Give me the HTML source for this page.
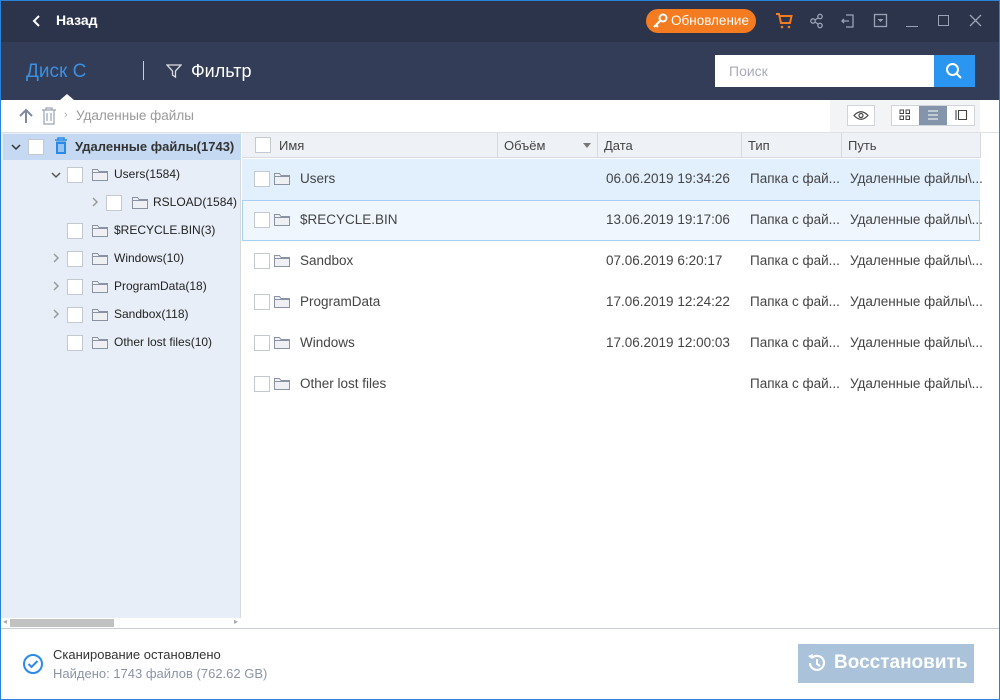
<!DOCTYPE html>
<html><head><meta charset="utf-8"><style>
*{box-sizing:border-box;margin:0;padding:0}
body{width:1000px;height:700px;overflow:hidden;font-family:"Liberation Sans","Noto Sans CJK SC",sans-serif;font-size:13px;color:#333;background:#fff;position:relative}
.a{position:absolute}
.win{left:0;top:0;width:1000px;height:700px;border:1px solid #2a83d8;border-top:none}
.tb{left:0;top:0;width:1000px;height:42px;background:#2c344c;border-top:1px solid #2a83d8}
.bar2{left:0;top:42px;width:1000px;height:58px;background:#333d57}
.cb{position:absolute;width:16px;height:16px;border:1px solid #c4c8cf;background:#fff}
.fold{position:absolute;width:16px;height:13px}
.t{position:absolute;white-space:nowrap}
.row{position:absolute;left:242px;width:738px;height:41px}
.row .t{top:12px;font-size:13.5px;color:#444}
.hd{position:absolute;top:133px;height:25px;background:#eef1f5;border-right:1px solid #d6dae0;border-bottom:1px solid #d6dae0}
.hd span{position:absolute;left:6px;top:5px;font-size:13px;color:#444}
.tr .t{font-size:12px;color:#222}
</style></head><body>
<div class="a tb"></div>
<div class="a bar2"></div>
<svg class="a" style="left:32px;top:15px" width="10" height="12"><path d="M7 1L2 6l5 5" stroke="#fff" stroke-width="2" fill="none"/></svg>
<div class="t" style="left:56px;top:12px;color:#fff;font-weight:bold;font-size:14px">Назад</div>
<div class="a" style="left:646px;top:9px;width:110px;height:24px;border-radius:12px;background:#f47b20"></div>
<svg class="a" style="left:652px;top:13px" width="16" height="16"><circle cx="11" cy="5" r="3.5" stroke="#fff" stroke-width="2" fill="none"/><path d="M8.5 7.5L2 14M4 12l2 2" stroke="#fff" stroke-width="2"/></svg>
<div class="t" style="left:671px;top:13px;color:#fff;font-size:13.5px">Обновление</div>
<svg class="a" style="left:775px;top:12px" width="18" height="18"><path d="M1 2h3l2 9h9l1.5-7H5" stroke="#f47b20" stroke-width="2" fill="none"/><circle cx="7" cy="15" r="1.3" fill="#f47b20"/><circle cx="14" cy="15" r="1.3" fill="#f47b20"/></svg>
<svg class="a" style="left:809px;top:13px" width="16" height="16"><circle cx="4" cy="8" r="2.2" stroke="#9aa3b5" stroke-width="1.3" fill="none"/><circle cx="11" cy="3.5" r="2.2" stroke="#9aa3b5" stroke-width="1.3" fill="none"/><circle cx="11" cy="12.5" r="2.2" stroke="#9aa3b5" stroke-width="1.3" fill="none"/><path d="M6 7l3-2M6 9l3 2" stroke="#9aa3b5" stroke-width="1.3"/></svg>
<svg class="a" style="left:840px;top:13px" width="16" height="16"><path d="M6 2h7v12H6M2 8h7M4 6L2 8l2 2" stroke="#9aa3b5" stroke-width="1.3" fill="none"/></svg>
<svg class="a" style="left:873px;top:13px" width="16" height="16"><rect x="1.5" y="1.5" width="12" height="12" stroke="#9aa3b5" stroke-width="1.3" fill="none"/><path d="M4.5 6h6l-3 3z" fill="#9aa3b5"/></svg>
<div class="a" style="left:906px;top:26px;width:12px;height:1px;background:#9aa3b5"></div>
<div class="a" style="left:938px;top:15px;width:11px;height:11px;border:1.3px solid #9aa3b5"></div>
<svg class="a" style="left:969px;top:14px" width="13" height="13"><path d="M1 1l11 11M12 1L1 12" stroke="#9aa3b5" stroke-width="1.3"/></svg>
<div class="t" style="left:26px;top:61px;color:#3d8fe0;font-size:19px">Диск C</div>
<div class="a" style="left:60px;top:94px;width:0;height:0;border-left:7px solid transparent;border-right:7px solid transparent;border-bottom:6px solid #fff"></div>
<div class="a" style="left:143px;top:61px;width:1px;height:19px;background:#ccd"></div>
<svg class="a" style="left:166px;top:63px" width="16" height="16"><path d="M1 2h14l-5.5 6v6l-3-2V8z" stroke="#ddd" stroke-width="1.3" fill="none"/></svg>
<div class="t" style="left:191px;top:61px;color:#fff;font-size:18px">Фильтр</div>
<div class="a" style="left:715px;top:55px;width:219px;height:32px;background:#fff"></div>
<div class="t" style="left:729px;top:63px;color:#aab;font-size:14px">Поиск</div>
<div class="a" style="left:934px;top:55px;width:41px;height:32px;background:#2b96f2"></div>
<svg class="a" style="left:944px;top:61px" width="20" height="20"><circle cx="8.5" cy="8.5" r="5.5" stroke="#fff" stroke-width="2" fill="none"/><path d="M12.5 12.5L17 17" stroke="#fff" stroke-width="2"/></svg>
<!-- toolbar -->
<svg class="a" style="left:18px;top:108px" width="16" height="16"><path d="M8 15V2M2 8l6-6 6 6" stroke="#7d8aa0" stroke-width="2" fill="none"/></svg>
<svg class="a" style="left:41px;top:107px" width="16" height="18"><path d="M1 3h14M5 3V1h6v2M3 3v14h10V3M6 6v8M10 6v8" stroke="#9aa3b5" stroke-width="1.2" fill="none"/></svg>
<div class="t" style="left:64px;top:109px;color:#aaa;font-size:11px">›</div>
<div class="t" style="left:76px;top:108px;color:#999;font-size:13.5px">Удаленные файлы</div>
<div class="a" style="left:830px;top:100px;width:150px;height:32px;background:#f3f4f6"></div>
<div class="a" style="left:847px;top:105px;width:28px;height:21px;border:1px solid #d0d4da;background:#fff"></div>
<svg class="a" style="left:853px;top:110px" width="16" height="11"><path d="M1 5.5Q8 -2 15 5.5Q8 13 1 5.5z" stroke="#444" stroke-width="1.2" fill="none"/><circle cx="8" cy="5.5" r="2" stroke="#444" stroke-width="1.2" fill="none"/></svg>
<div class="a" style="left:891px;top:105px;width:84px;height:21px;border:1px solid #d0d4da;background:#fff"></div>
<div class="a" style="left:919px;top:106px;width:28px;height:19px;background:#8394ab"></div>
<svg class="a" style="left:899px;top:109px" width="12" height="12"><rect x="1" y="1" width="3.5" height="3.5" stroke="#444" fill="none"/><rect x="7" y="1" width="3.5" height="3.5" stroke="#444" fill="none"/><rect x="1" y="7" width="3.5" height="3.5" stroke="#444" fill="none"/><rect x="7" y="7" width="3.5" height="3.5" stroke="#444" fill="none"/></svg>
<svg class="a" style="left:927px;top:109px" width="12" height="12"><path d="M1 2h10M1 6h10M1 10h10" stroke="#fff" stroke-width="1"/></svg>
<svg class="a" style="left:955px;top:109px" width="13" height="12"><path d="M1 1v10M3.5 1.5h8v9h-8z" stroke="#444" stroke-width="1.1" fill="none"/></svg>
<div class="a" style="left:0;top:132px;width:1000px;height:1px;background:#dde0e5"></div>
<!-- left panel -->
<div class="a" style="left:1px;top:133px;width:240px;height:495px;background:#e8eef7;border-right:1px solid #d6dae0"></div>
<div class="a" style="left:3px;top:134px;width:238px;height:26px;background:#c5daf2"></div>
<div class="tr">
<svg class="a" style="left:11px;top:143px" width="10" height="8"><path d="M1 2l4 4 4-4" stroke="#333" stroke-width="1.5" fill="none"/></svg>
<div class="cb" style="left:28px;top:139px"></div>
<svg class="a" style="left:54px;top:137px" width="14" height="18"><path d="M1 3h12M4 3V1h6v2" stroke="#2b8ae8" stroke-width="1.5" fill="none"/><rect x="2" y="4.5" width="10" height="12.5" fill="#2b8ae8"/><path d="M5 7v8M7 7v8M9 7v8" stroke="#fff" stroke-width="1"/></svg>
<div class="t" style="left:75px;top:139px;font-weight:bold;font-size:13px;color:#333">Удаленные файлы(1743)</div>
<svg class="a" style="left:51px;top:171px" width="10" height="8"><path d="M1 2l4 4 4-4" stroke="#555" stroke-width="1.5" fill="none"/></svg>
<div class="cb" style="left:67px;top:167px"></div>
<svg class="fold" style="left:92px;top:168px"><path d="M.5 1.5h5l1.5 2h8.5v9H.5z" fill="#eef0f4" stroke="#8a93a3"/><path d="M.5 4.5h15" stroke="#8a93a3"/></svg>
<div class="t" style="left:114px;top:167px">Users(1584)</div>
<svg class="a" style="left:91px;top:197px" width="8" height="10"><path d="M2 1l4 4-4 4" stroke="#999" stroke-width="1.5" fill="none"/></svg>
<div class="cb" style="left:106px;top:195px"></div>
<svg class="fold" style="left:132px;top:196px"><path d="M.5 1.5h5l1.5 2h8.5v9H.5z" fill="#eef0f4" stroke="#8a93a3"/><path d="M.5 4.5h15" stroke="#8a93a3"/></svg>
<div class="t" style="left:153px;top:195px">RSLOAD(1584)</div>
<div class="cb" style="left:67px;top:223px"></div>
<svg class="fold" style="left:92px;top:224px"><path d="M.5 1.5h5l1.5 2h8.5v9H.5z" fill="#eef0f4" stroke="#8a93a3"/><path d="M.5 4.5h15" stroke="#8a93a3"/></svg>
<div class="t" style="left:114px;top:223px">$RECYCLE.BIN(3)</div>
<svg class="a" style="left:52px;top:253px" width="8" height="10"><path d="M2 1l4 4-4 4" stroke="#999" stroke-width="1.5" fill="none"/></svg>
<div class="cb" style="left:67px;top:251px"></div>
<svg class="fold" style="left:92px;top:252px"><path d="M.5 1.5h5l1.5 2h8.5v9H.5z" fill="#eef0f4" stroke="#8a93a3"/><path d="M.5 4.5h15" stroke="#8a93a3"/></svg>
<div class="t" style="left:114px;top:251px">Windows(10)</div>
<svg class="a" style="left:52px;top:281px" width="8" height="10"><path d="M2 1l4 4-4 4" stroke="#999" stroke-width="1.5" fill="none"/></svg>
<div class="cb" style="left:67px;top:279px"></div>
<svg class="fold" style="left:92px;top:280px"><path d="M.5 1.5h5l1.5 2h8.5v9H.5z" fill="#eef0f4" stroke="#8a93a3"/><path d="M.5 4.5h15" stroke="#8a93a3"/></svg>
<div class="t" style="left:114px;top:279px">ProgramData(18)</div>
<svg class="a" style="left:52px;top:309px" width="8" height="10"><path d="M2 1l4 4-4 4" stroke="#999" stroke-width="1.5" fill="none"/></svg>
<div class="cb" style="left:67px;top:307px"></div>
<svg class="fold" style="left:92px;top:308px"><path d="M.5 1.5h5l1.5 2h8.5v9H.5z" fill="#eef0f4" stroke="#8a93a3"/><path d="M.5 4.5h15" stroke="#8a93a3"/></svg>
<div class="t" style="left:114px;top:307px">Sandbox(118)</div>
<div class="cb" style="left:67px;top:335px"></div>
<svg class="fold" style="left:92px;top:336px"><path d="M.5 1.5h5l1.5 2h8.5v9H.5z" fill="#eef0f4" stroke="#8a93a3"/><path d="M.5 4.5h15" stroke="#8a93a3"/></svg>
<div class="t" style="left:114px;top:335px">Other lost files(10)</div>
</div>
<div class="a" style="left:1px;top:618px;width:240px;height:10px;background:#fff"></div>
<div class="a" style="left:10px;top:619px;width:104px;height:8px;background:#c2c2c2"></div>
<div class="t" style="left:3px;top:617px;font-size:8px;color:#aaa">◂</div>
<div class="t" style="left:234px;top:617px;font-size:8px;color:#aaa">▸</div>
<!-- headers -->
<div class="hd" style="left:242px;width:256px"><div class="cb" style="left:13px;top:4px"></div><span style="left:37px">Имя</span></div>
<div class="hd" style="left:498px;width:100px"><span>Объём</span><svg class="a" style="left:85px;top:10px" width="8" height="5"><path d="M0 0h8L4 5z" fill="#777"/></svg></div>
<div class="hd" style="left:598px;width:144px"><span>Дата</span></div>
<div class="hd" style="left:742px;width:100px"><span>Тип</span></div>
<div class="hd" style="left:842px;width:139px"><span>Путь</span></div>
<!-- rows -->
<div class="row" style="top:159px;background:#e2effc"></div>
<div class="row" style="top:200px;background:#eff6fe;border:1px solid #a9cff3"></div>
<div id="rows"></div>
<script></script>
<div class="tr2">
<!-- row template repeated -->
</div>
<div style="position:absolute;left:0;top:0">
<div class="cb" style="left:254px;top:171px"></div><svg class="fold" style="left:274px;top:172px"><path d="M.5 1.5h5l1.5 2h8.5v9H.5z" fill="#eef0f4" stroke="#8a93a3"/><path d="M.5 4.5h15" stroke="#8a93a3"/></svg>
<div class="t" style="left:300px;top:171px;font-size:13.5px;color:#444">Users</div><div class="t" style="left:606px;top:171px;font-size:13.5px;color:#444">06.06.2019 19:34:26</div><div class="t" style="left:750px;top:171px;font-size:13.5px;color:#444">Папка с фай...</div><div class="t" style="left:850px;top:171px;font-size:13.5px;color:#444">Удаленные файлы\...</div>
<div class="cb" style="left:254px;top:212px"></div><svg class="fold" style="left:274px;top:213px"><path d="M.5 1.5h5l1.5 2h8.5v9H.5z" fill="#eef0f4" stroke="#8a93a3"/><path d="M.5 4.5h15" stroke="#8a93a3"/></svg>
<div class="t" style="left:300px;top:212px;font-size:13.5px;color:#444">$RECYCLE.BIN</div><div class="t" style="left:606px;top:212px;font-size:13.5px;color:#444">13.06.2019 19:17:06</div><div class="t" style="left:750px;top:212px;font-size:13.5px;color:#444">Папка с фай...</div><div class="t" style="left:850px;top:212px;font-size:13.5px;color:#444">Удаленные файлы\...</div>
<div class="cb" style="left:254px;top:253px"></div><svg class="fold" style="left:274px;top:254px"><path d="M.5 1.5h5l1.5 2h8.5v9H.5z" fill="#eef0f4" stroke="#8a93a3"/><path d="M.5 4.5h15" stroke="#8a93a3"/></svg>
<div class="t" style="left:300px;top:253px;font-size:13.5px;color:#444">Sandbox</div><div class="t" style="left:606px;top:253px;font-size:13.5px;color:#444">07.06.2019 6:20:17</div><div class="t" style="left:750px;top:253px;font-size:13.5px;color:#444">Папка с фай...</div><div class="t" style="left:850px;top:253px;font-size:13.5px;color:#444">Удаленные файлы\...</div>
<div class="cb" style="left:254px;top:294px"></div><svg class="fold" style="left:274px;top:295px"><path d="M.5 1.5h5l1.5 2h8.5v9H.5z" fill="#eef0f4" stroke="#8a93a3"/><path d="M.5 4.5h15" stroke="#8a93a3"/></svg>
<div class="t" style="left:300px;top:294px;font-size:13.5px;color:#444">ProgramData</div><div class="t" style="left:606px;top:294px;font-size:13.5px;color:#444">17.06.2019 12:24:22</div><div class="t" style="left:750px;top:294px;font-size:13.5px;color:#444">Папка с фай...</div><div class="t" style="left:850px;top:294px;font-size:13.5px;color:#444">Удаленные файлы\...</div>
<div class="cb" style="left:254px;top:335px"></div><svg class="fold" style="left:274px;top:336px"><path d="M.5 1.5h5l1.5 2h8.5v9H.5z" fill="#eef0f4" stroke="#8a93a3"/><path d="M.5 4.5h15" stroke="#8a93a3"/></svg>
<div class="t" style="left:300px;top:335px;font-size:13.5px;color:#444">Windows</div><div class="t" style="left:606px;top:335px;font-size:13.5px;color:#444">17.06.2019 12:00:03</div><div class="t" style="left:750px;top:335px;font-size:13.5px;color:#444">Папка с фай...</div><div class="t" style="left:850px;top:335px;font-size:13.5px;color:#444">Удаленные файлы\...</div>
<div class="cb" style="left:254px;top:376px"></div><svg class="fold" style="left:274px;top:377px"><path d="M.5 1.5h5l1.5 2h8.5v9H.5z" fill="#eef0f4" stroke="#8a93a3"/><path d="M.5 4.5h15" stroke="#8a93a3"/></svg>
<div class="t" style="left:300px;top:376px;font-size:13.5px;color:#444">Other lost files</div><div class="t" style="left:750px;top:376px;font-size:13.5px;color:#444">Папка с фай...</div><div class="t" style="left:850px;top:376px;font-size:13.5px;color:#444">Удаленные файлы\...</div>
</div>
<!-- bottom -->
<div class="a" style="left:0;top:628px;width:1000px;height:1px;background:#c9ced6"></div>
<svg class="a" style="left:22px;top:653px" width="22" height="22"><circle cx="11" cy="11" r="9" stroke="#2b8ae8" stroke-width="2" fill="none"/><path d="M6.5 11l3 3 6-6" stroke="#2b8ae8" stroke-width="2" fill="none"/></svg>
<div class="t" style="left:53px;top:647px;font-size:13px;color:#333">Сканирование остановлено</div>
<div class="t" style="left:53px;top:666px;font-size:13px;color:#8a94a6">Найдено: 1743 файлов (762.62 GB)</div>
<div class="a" style="left:798px;top:644px;width:176px;height:39px;background:#abc3da"></div>
<svg class="a" style="left:806px;top:652px" width="22" height="22"><path d="M4 11a7 7 0 1 0 2-5" stroke="#fff" stroke-width="2.2" fill="none"/><path d="M2 4l4 3 1-5z" fill="#fff"/><path d="M11 7v5l3 2" stroke="#fff" stroke-width="2" fill="none"/></svg>
<div class="t" style="left:834px;top:652px;font-size:19px;color:#fff;font-weight:bold">Восстановить</div>
<div class="a win"></div>
</body></html>
